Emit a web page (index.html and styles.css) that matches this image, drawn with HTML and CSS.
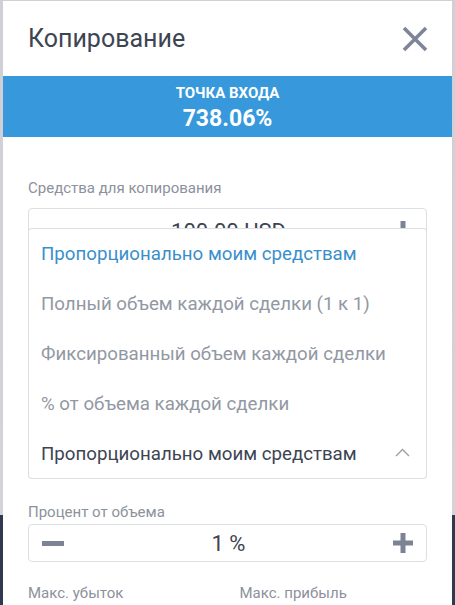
FILE: index.html
```html
<!DOCTYPE html>
<html lang="ru">
<head>
<meta charset="utf-8">
<title>Копирование</title>
<link rel="stylesheet" href="styles.css">
</head>
<body>
<div class="modal">
  <div class="header">
    <h1 class="title">Копирование</h1>
    <svg class="close" width="26" height="26" viewBox="0 0 26 26"><path d="M2 2L24 24M24 2L2 24" stroke="#7f8598" stroke-width="3.6" stroke-linecap="butt"/></svg>
  </div>
  <div class="banner">
    <div class="banner-label">ТОЧКА ВХОДА</div>
    <div class="banner-value">738.06%</div>
  </div>
  <div class="content">
    <div class="label label-first">Средства для копирования</div>
    <div class="stepper stepper-tall">
      <svg class="minus" width="22" height="5" viewBox="0 0 22 5"><rect width="22" height="5" fill="#7b8395"/></svg>
      <span class="value">100.00 USD</span>
      <svg class="plus" width="20" height="20" viewBox="0 0 20 20"><rect x="7.5" y="0" width="5" height="20" fill="#7b8395"/><rect x="0" y="7.5" width="20" height="5" fill="#7b8395"/></svg>
    </div>
    <div class="dropdown">
      <ul class="options">
        <li class="option option-active">Пропорционально моим средствам</li>
        <li class="option">Полный объем каждой сделки (1 к 1)</li>
        <li class="option">Фиксированный объем каждой сделки</li>
        <li class="option">% от объема каждой сделки</li>
      </ul>
      <div class="selected">
        <span>Пропорционально моим средствам</span>
        <svg class="chevron" width="15" height="9" viewBox="0 0 15 9"><path d="M1 8L7.5 1.5L14 8" fill="none" stroke="#9aa0a8" stroke-width="1.4"/></svg>
      </div>
    </div>
    <div class="label label-second">Процент от объема</div>
    <div class="stepper">
      <svg class="minus" width="22" height="5" viewBox="0 0 22 5"><rect width="22" height="5" fill="#7b8395"/></svg>
      <span class="value">1 %</span>
      <svg class="plus" width="20" height="20" viewBox="0 0 20 20"><rect x="7.5" y="0" width="5" height="20" fill="#7b8395"/><rect x="0" y="7.5" width="20" height="5" fill="#7b8395"/></svg>
    </div>
    <div class="limits">
      <div class="label">Макс. убыток</div>
      <div class="label">Макс. прибыль</div>
    </div>
  </div>
</div>
</body>
</html>
```
FILE: styles.css
```css
html, body {
  margin: 0;
  padding: 0;
}
body {
  width: 455px;
  height: 605px;
  overflow: hidden;
  background: linear-gradient(to bottom, #cfd0d5 0, #d3d4d8 515px, #2f3a50 515px, #2f3a50 100%);
  font-family: Roboto, "Noto Sans", "Liberation Sans", sans-serif;
}
.modal {
  margin: 1px 3px 0;
  height: 604px;
  background: #ffffff;
  overflow: hidden;
}
.header {
  height: 75px;
  display: flex;
  align-items: center;
  justify-content: space-between;
  padding: 0 24px 0 25px;
}
.title {
  margin: 0;
  font-weight: 400;
  font-size: 25px;
  color: #3d4452;
  line-height: 28px;
}
.close {
  display: block;
  margin-top: 1px;
}
.banner {
  height: 52px;
  padding-top: 9px;
  background: #3799dc;
  color: #ffffff;
  display: flex;
  flex-direction: column;
  align-items: center;
}
.banner-label {
  font-size: 15px;
  font-weight: 700;
  line-height: 17px;
}
.banner-value {
  font-size: 23px;
  font-weight: 700;
  line-height: 26px;
  margin-top: 4px;
}
.content {
  padding: 42px 25px 0;
}
.label {
  font-size: 15px;
  line-height: 18px;
  color: #8c919c;
}
.label-first {
  margin-bottom: 11px;
}
.stepper {
  height: 36px;
  border: 1px solid #dcdfe3;
  border-radius: 4px;
  display: flex;
  align-items: center;
  justify-content: space-between;
  padding: 0 13px;
}
.stepper-tall {
  height: 44px;
}
.value {
  font-size: 22px;
  color: #3d4452;
}
.minus, .plus {
  display: block;
}
.dropdown {
  position: relative;
  margin-top: 175px;
  height: 49px;
  border: 1px solid #dcdfe3;
  border-top: none;
  border-radius: 0 0 4px 4px;
}
.options {
  position: absolute;
  left: -1px;
  right: -1px;
  bottom: 100%;
  margin: 0;
  padding: 0;
  list-style: none;
  background: #ffffff;
  border: 1px solid #dcdfe3;
  border-bottom: none;
  border-radius: 4px 4px 0 0;
}
.option {
  height: 50px;
  display: flex;
  align-items: center;
  padding-left: 12px;
  font-size: 18.7px;
  color: #9298a3;
}
.option-active {
  color: #3a8fcb;
}
.selected {
  height: 49px;
  display: flex;
  align-items: center;
  justify-content: space-between;
  padding: 0 16px 0 12px;
  font-size: 18.7px;
  color: #3d4452;
}
.chevron {
  display: block;
  margin-top: -2px;
}
.label-second {
  margin-top: 24px;
  margin-bottom: 3px;
}
.limits {
  margin-top: 22px;
  display: grid;
  grid-template-columns: 1fr 1fr;
  column-gap: 24px;
}
```
